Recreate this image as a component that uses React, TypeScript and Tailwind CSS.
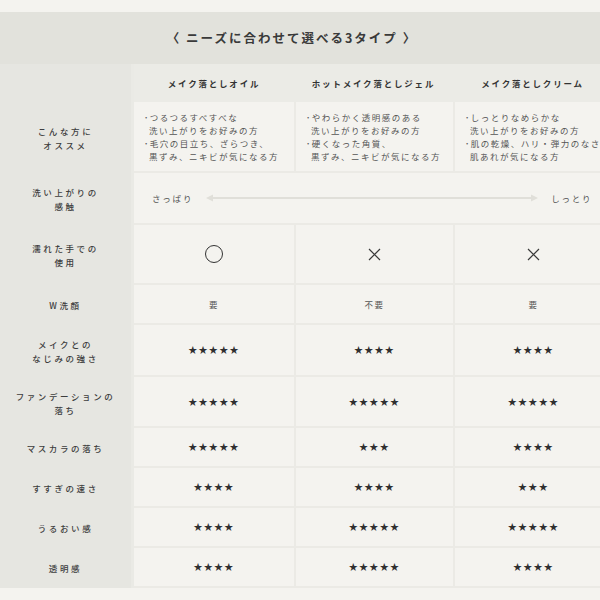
const rows: { label: string[]; h: string; kind: 'stars' | 'text' | 'mark'; values: (number | string)[] }[] = [
  { label: ['濡れた手での', '使用'], h: 'h-[60px]', kind: 'mark', values: ['o', 'x', 'x'] },
  { label: ['W洗顔'], h: 'h-[40px]', kind: 'text', values: ['要', '不要', '要'] },
  { label: ['メイクとの', 'なじみの強さ'], h: 'h-[52px]', kind: 'stars', values: [5, 4, 4] },
  { label: ['ファンデーションの', '落ち'], h: 'h-[51px]', kind: 'stars', values: [5, 5, 5] },
  { label: ['マスカラの落ち'], h: 'h-[40px]', kind: 'stars', values: [5, 3, 4] },
  { label: ['すすぎの速さ'], h: 'h-[40px]', kind: 'stars', values: [4, 4, 3] },
  { label: ['うるおい感'], h: 'h-[40px]', kind: 'stars', values: [4, 5, 5] },
  { label: ['透明感'], h: 'h-[40px]', kind: 'stars', values: [4, 5, 4] },
]

const recommend = [
  ['･つるつるすべすべな', '洗い上がりをお好みの方', '･毛穴の目立ち、ざらつき、', '黒ずみ、ニキビが気になる方'],
  ['･やわらかく透明感のある', '洗い上がりをお好みの方', '･硬くなった角質、', '黒ずみ、ニキビが気になる方'],
  ['･しっとりなめらかな', '洗い上がりをお好みの方', '･肌の乾燥、ハリ・弾力のなさ', '肌あれが気になる方'],
]

const widths = ['w-[160px]', 'w-[159px]', 'w-[159px]']

function Label({ lines }: { lines: string[] }) {
  return (
    <div className="w-[134px] shrink-0 bg-[#e6e6e1] border-r-[3px] border-[#eaeae5] flex flex-col items-center justify-center text-[8.5px] font-medium leading-[14px] tracking-[2.6px] text-[#3d3d3d]">
      {lines.map((l) => (
        <span key={l}>{l}</span>
      ))}
    </div>
  )
}

function Cross() {
  return (
    <svg width="13" height="13" viewBox="0 0 13 13">
      <path d="M1 1 L12 12 M12 1 L1 12" stroke="#3a3a3a" strokeWidth="1.2" />
    </svg>
  )
}

function Value({ kind, v }: { kind: string; v: number | string }) {
  if (kind === 'stars') {
    return <span className="text-[9px] tracking-[1.3px] text-[#2f2f2f]">{'★'.repeat(v as number)}</span>
  }
  if (kind === 'mark') {
    return v === 'o' ? <div className="w-[18px] h-[18px] rounded-full border-[1.6px] border-[#333]" /> : <Cross />
  }
  return <span className="text-[8.5px] tracking-[1.5px] text-[#555]">{v}</span>
}

export default function App() {
  return (
    <div className="w-[600px] h-[600px] overflow-hidden bg-[#f4f3ef] font-['Noto_Sans_CJK_JP',sans-serif]">
      <div className="h-[12px]" />
      <div className="h-[52px] bg-[#e2e2dc] flex items-center justify-center pr-[16px] text-[12.5px] font-bold tracking-[2px] text-[#3a3a3a]">
        〈 ニーズに合わせて選べる3タイプ 〉
      </div>

      <div className="w-[612px]">
        {/* header row */}
        <div className="flex h-[38px]">
          <Label lines={[]} />
          {['メイク落としオイル', 'ホットメイク落としジェル', 'メイク落としクリーム'].map((t, i) => (
            <div
              key={t}
              className={`${widths[i]} flex items-center justify-center bg-[#ebebe6] text-[8.5px] font-bold tracking-[1.8px] text-[#333]`}
            >
              {t}
            </div>
          ))}
        </div>

        {/* recommend */}
        <div className="flex h-[71px]">
          <Label lines={['こんな方に', 'オススメ']} />
          {recommend.map((lines, i) => (
            <div
              key={i}
              className={`${widths[i]} border-b-2 border-[#ebeae5] ${i > 0 ? 'border-l-2' : ''} flex flex-col justify-center pl-[10px] text-[8.5px] leading-[13px] tracking-[1.5px] text-[#555] whitespace-nowrap`}
            >
              {lines.map((l) => (
                <span key={l} className={l.startsWith('･') ? '' : 'pl-[5px]'}>
                  {l}
                </span>
              ))}
            </div>
          ))}
        </div>

        {/* texture */}
        <div className="flex h-[52px]">
          <Label lines={['洗い上がりの', '感触']} />
          <div className="w-[478px] border-b-2 border-[#ebeae5] flex items-center pl-[18px] text-[8.5px] tracking-[1.8px] text-[#555]">
            <span>さっぱり</span>
            <svg width="332" height="10" viewBox="0 0 332 10" className="mx-[13px]">
              <path d="M6 5 H326" stroke="#e0dfd9" strokeWidth="2" />
              <path d="M0 5 L7 1.5 L7 8.5 Z" fill="#e0dfd9" />
              <path d="M332 5 L325 1.5 L325 8.5 Z" fill="#e0dfd9" />
            </svg>
            <span>しっとり</span>
          </div>
        </div>

        {rows.map((r) => (
          <div key={r.label.join('')} className={`flex ${r.h}`}>
            <Label lines={r.label} />
            {r.values.map((v, i) => (
              <div
                key={i}
                className={`${widths[i]} border-b-2 border-[#ebeae5] ${i > 0 ? 'border-l-2' : ''} flex items-center justify-center`}
              >
                <Value kind={r.kind} v={v} />
              </div>
            ))}
          </div>
        ))}
      </div>
    </div>
  )
}
